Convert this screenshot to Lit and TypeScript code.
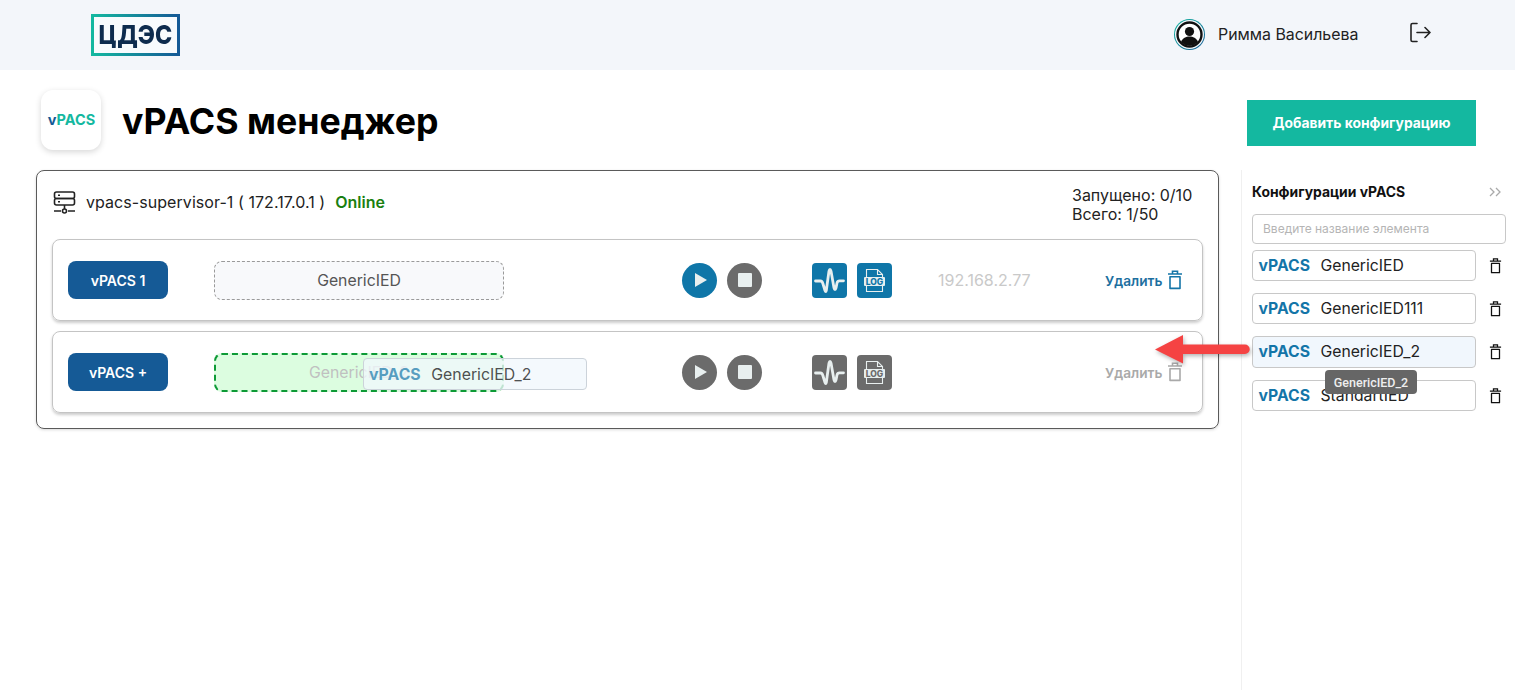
import { LitElement, html, css, svg } from "lit";
import { customElement } from "lit/decorators.js";

const trash = (c: string, w = 16, h = 20) => html`<svg width=${w} height=${h} viewBox="0 0 16 20" fill="none" stroke=${c} stroke-width="1.600"><path d="M1 4h14M5.500 3.600V1.200h5v2.400"/><path d="M3 6.800h10v11.600H3z" stroke-linejoin="round"/></svg>`;
const pulse = svg`<path d="M3.500 18H8.500C10 18 10.500 19 11 21L13 27.500C13.500 29 14 29 14.300 27.500L17 8C17.500 6 18.500 6 19 8L22 25C22.500 27 23.500 27 24 25L25 20C25.500 18 26 17.800 27.500 17.800H31.500" fill="none" stroke="#e8efef" stroke-width="2.800" stroke-linecap="round" stroke-linejoin="round"/>`;
const pulseIcon = html`<svg width="35" height="35" viewBox="0 0 35 35">${pulse}</svg>`;
const logIcon = html`<svg width="35" height="35" viewBox="0 0 35 35" fill="none" stroke="#e8efef" stroke-width="1.100"><path d="M9.500 14V6.500h11l5 5V14M20.500 6.500V11.500H25.500M9.500 23v5.500h16V23"/><rect x="7" y="14" width="21" height="9" rx="1" fill="#e8efef" stroke="none"/><text x="17.500" y="21.600" text-anchor="middle" font-family="Inter,sans-serif" font-size="8.500" font-weight="800" fill="currentColor" stroke="none">LOG</text></svg>`;

@customElement("app-root")
export class AppRoot extends LitElement {
  static styles = css`
    :host { display: block; position: relative; width: 1515px; height: 690px; overflow: hidden; background: #fff; font-family: Inter, "Noto Sans", sans-serif; color: #111; }
    * { box-sizing: border-box; }
    header { height: 70px; background: #f3f6fa; display: flex; align-items: center; padding-left: 91px; }
    .logo { width: 89px; height: 42px; margin-top: -1px; border: 3px solid; border-image: linear-gradient(90deg, #14b8a0, #155a96) 1; background: #f8fbfd; display: flex; align-items: center; justify-content: center; font-size: 26px; font-weight: 800; color: #0e2c4e; line-height: 1; overflow: hidden; }
    .logo span { display: block; transform: scaleX(.89); }
    .user { margin-left: auto; display: flex; align-items: center; margin-right: 84px; margin-top: -2px; }
    .avatar { width: 31px; height: 31px; border-radius: 50%; background: linear-gradient(135deg, #14b8a0, #155a96); display: flex; align-items: center; justify-content: center; margin-right: 13px; flex: none; }
    .avatar-in { width: 29px; height: 29px; border-radius: 50%; background: #f3f6fa; display: flex; align-items: center; justify-content: center; }
    .uname { font-size: 15.9px; color: #222; width: 191px; flex: none; white-space: nowrap; }
    .logout { margin-top: -2px; flex: none; }
    .content { display: flex; }
    .left { width: 1241px; flex: none; }
    .title-row { height: 100px; padding: 20px 0 0 41px; position: relative; display: flex; align-items: flex-start; width: 1515px; }
    .applogo { width: 60px; height: 60px; border-radius: 12px; background: #fff; box-shadow: 0 2px 6px rgba(0,0,0,.16); display: flex; align-items: center; justify-content: center; padding: 0 0 2px 1px; font-weight: 700; font-size: 14.5px; color: #14b8a0; }
    .applogo b { color: #155a96; font-weight: 700; }
    h1 { margin: 8px 0 0 21px; font-size: 35.7px; font-weight: 700; line-height: 46px; color: #000; white-space: nowrap; }
    .add { position: absolute; left: 1247px; top: 30px; width: 229px; height: 46px; background: #14b8a0; color: #fff; display: flex; align-items: center; justify-content: center; font-size: 13.85px; font-weight: 700; }
    .panel { margin-left: 36px; width: 1183px; height: 259px; border: 1px solid #5a5a5a; border-radius: 8px; padding: 0 15px; box-shadow: 0 1px 3px rgba(0,0,0,.15); }
    .panel-head { height: 68px; display: flex; justify-content: space-between; position: relative; }
    .srv { display: flex; align-items: center; height: 62px; font-size: 16px; color: #222; margin-left: 1px; white-space: pre; letter-spacing: .06px; }
    .srv svg { margin-right: 10px; }
    .online { color: #1a7f10; font-weight: 600; margin-left: 10px; font-size: 16px; letter-spacing: 0; }
    .stats { font-size: 16px; line-height: 18.5px; padding-top: 15px; color: #222; width: 131px; }
    .row { height: 82px; border: 1px solid #c4c4c4; border-radius: 8px; display: flex; align-items: center; padding-left: 15px; margin-bottom: 10px; box-shadow: 0 2px 3px rgba(0,0,0,.2); }
    .vbtn { width: 100px; height: 38px; border-radius: 8px; background: #155a96; color: #fff; font-size: 14px; font-weight: 600; display: flex; align-items: center; justify-content: center; margin-right: 46px; flex: none; padding-top: 1px; }
    .slot { width: 290px; height: 39px; border-radius: 8px; border: 1px dashed #9a9a9a; background: #f8f9fb; color: #555; font-size: 15.8px; display: flex; align-items: center; justify-content: center; flex: none; margin-right: 178px; }
    .slot.drop { border: 2px dashed #0d9a36; background: #dcfde0; color: #c0c0c0; }
    .round { width: 35px; height: 35px; border-radius: 50%; background: #6b6b6b; display: flex; align-items: center; justify-content: center; flex: none; margin-right: 10px; }
    .round.on { background: #0f76a8; }
    .tri { width: 0; height: 0; border-left: 12px solid #e8efef; border-top: 7px solid transparent; border-bottom: 7px solid transparent; margin-left: 3px; }
    .sq { width: 14px; height: 14px; background: #e8efef; border-radius: 1px; }
    .sqbtn { width: 35px; height: 35px; border-radius: 4px; background: #6b6b6b; color: #6b6b6b; flex: none; margin-right: 10px; display: block; line-height: 0; }
    .sqbtn.on { background: #0f76a8; color: #0f76a8; }
    .gap { width: 40px; flex: none; }
    .ip { width: 92px; margin-left: 36px; margin-right: 75px; font-size: 16px; color: #c9c9c9; flex: none; white-space: nowrap; }
    .del { display: flex; align-items: center; gap: 5px; font-size: 13.7px; font-weight: 600; color: #1d6f9f; flex: none; padding-top: 1px; }
    .del.off { color: #a9a9a9; }
    .del svg { margin-top: -1px; }
    aside { flex: 1; border-left: 1px solid #f0f0f0; height: 520px; margin-top: 100px; padding: 0 0 0 10px; }
    .side-head { height: 44px; display: flex; align-items: center; font-size: 13.9px; font-weight: 700; color: #111; position: relative; white-space: nowrap; }
    .chev { position: absolute; left: 236px; top: 15px; }
    .search { width: 254px; height: 30px; border: 1px solid #c8c8c8; border-radius: 4px; padding: 0 0 2px 10px; display: flex; align-items: center; font-size: 12px; color: #b5b5b5; margin-bottom: 6px; }
    .item { display: flex; align-items: center; height: 31px; margin-bottom: 12px; }
    .item.tall { height: 32px; }
    .cfg { width: 224px; height: 31px; border: 1px solid #c8c8c8; border-radius: 4px; display: flex; align-items: center; padding: 0 0 1px 5.5px; font-size: 15.75px; color: #222; flex: none; margin-right: 13px; white-space: nowrap; overflow: hidden; }
    .cfg b { color: #1475a8; font-weight: 700; margin-right: 10.5px; }
    .cfg.hover { background: #f1f7fd; height: 32px; padding-bottom: 2px; }
    .ghost { position: absolute; left: 363px; top: 358px; width: 224px; height: 32px; background: rgba(241,247,253,.78); border: 1px solid #ccd3da; border-radius: 4px; display: flex; align-items: center; padding-left: 5px; font-size: 15.85px; color: rgba(34,34,34,.8); }
    .ghost b { color: rgba(20,117,168,.7); margin-right: 10.5px; font-weight: 700; }
    .tip { position: absolute; left: 1325px; top: 370px; width: 92px; height: 24px; border-radius: 4px; background: #666; color: #eee; font-size: 12.5px; font-weight: 500; display: flex; align-items: center; justify-content: center; font-family: Roboto, sans-serif; }
    .arrow { position: absolute; left: 1150px; top: 330px; filter: drop-shadow(1px 2px 2px rgba(0,0,0,.3)); }
  `;

  private row(name: string, on: boolean, slotCls: string, label: string, ip: string) {
    return html`<div class="row">
      <div class="vbtn">${label}</div>
      <div class="slot ${slotCls}"><span>${name}</span></div>
      <div class="round ${on ? "on" : ""}"><div class="tri"></div></div>
      <div class="round"><div class="sq"></div></div>
      <div class="gap"></div>
      <div class="sqbtn ${on ? "on" : ""}">${pulseIcon}</div>
      <div class="sqbtn ${on ? "on" : ""}">${logIcon}</div>
      <div class="ip">${ip}</div>
      <div class="del ${on ? "" : "off"}">Удалить ${trash(on ? "#1475a8" : "#a9a9a9")}</div>
    </div>`;
  }

  private item(name: string, hover = false) {
    return html`<div class="item ${hover ? "tall" : ""}"><div class="cfg ${hover ? "hover" : ""}"><b>vPACS</b>${name}</div>${trash("#111", 13, 16)}</div>`;
  }

  render() {
    return html`
      <header>
        <div class="logo"><span>ЦДЭС</span></div>
        <div class="user">
          <div class="avatar"><div class="avatar-in">
            <svg width="27" height="27" viewBox="0 0 27 27"><circle cx="13.500" cy="13.500" r="12" fill="#fff" stroke="#111" stroke-width="2.400"/><circle cx="13.500" cy="10.500" r="4.600" fill="#111"/><path d="M5 21c1.500-4 5-5.500 8.500-5.500S20.500 17 22 21c-2 2.400-5 3.800-8.500 3.800S7 23.400 5 21z" fill="#111"/></svg>
          </div></div>
          <div class="uname">Римма Васильева</div>
          <svg class="logout" width="22" height="22" viewBox="0 0 22 22" fill="none" stroke="#222" stroke-width="1.600" stroke-linecap="round" stroke-linejoin="round"><path d="M8 1.500H3.500A1.500 1.500 0 0 0 2 3v15a1.500 1.500 0 0 0 1.500 1.500H8M8 10.500h13M16 5.500l5 5-5 5"/></svg>
        </div>
      </header>
      <div class="content">
        <div class="left">
          <div class="title-row">
            <div class="applogo"><span><b>v</b>PACS</span></div>
            <h1>vPACS менеджер</h1>
            <div class="add">Добавить конфигурацию</div>
          </div>
          <div class="panel">
            <div class="panel-head">
              <div class="srv">
                <svg width="23" height="23" viewBox="0 0 23 23" fill="none" stroke="#222" stroke-width="1.600"><rect x="1.500" y="1" width="20" height="6.500" rx="2"/><rect x="1.500" y="7.500" width="20" height="6.500" rx="2"/><path d="M5 4.200h2M5 10.800h2M11.500 14v4M1 20h7M15 20h7"/><circle cx="11.500" cy="20" r="2"/></svg>
                <span>vpacs-supervisor-1 ( 172.17.0.1 )</span><span class="online">Online</span>
              </div>
              <div class="stats">Запущено: 0/10<br />Всего: 1/50</div>
            </div>
            ${this.row("GenericIED", true, "", "vPACS 1", "192.168.2.77")}
            ${this.row("GenericIED_2", false, "drop", "vPACS +", "")}
          </div>
        </div>
        <aside>
          <div class="side-head">Конфигурации vPACS
            <svg class="chev" width="14" height="14" viewBox="0 0 14 14" fill="none" stroke="#aaa" stroke-width="1.300"><path d="M2 3l4 4-4 4M8 3l4 4-4 4"/></svg>
          </div>
          <div class="search">Введите название элемента</div>
          ${this.item("GenericIED")}
          ${this.item("GenericIED111")}
          ${this.item("GenericIED_2", true)}
          ${this.item("StandartIED")}
        </aside>
      </div>
      <div class="ghost"><b>vPACS</b>GenericIED_2</div>
      <div class="tip">GenericIED_2</div>
      <svg class="arrow" width="105" height="40" viewBox="0 0 105 40"><path d="M5 19.500 L33 5 V14.500 H95 a4.500 4.500 0 0 1 0 9.500 H33 V33.500 Z" fill="#f54343"/></svg>
    `;
  }
}
